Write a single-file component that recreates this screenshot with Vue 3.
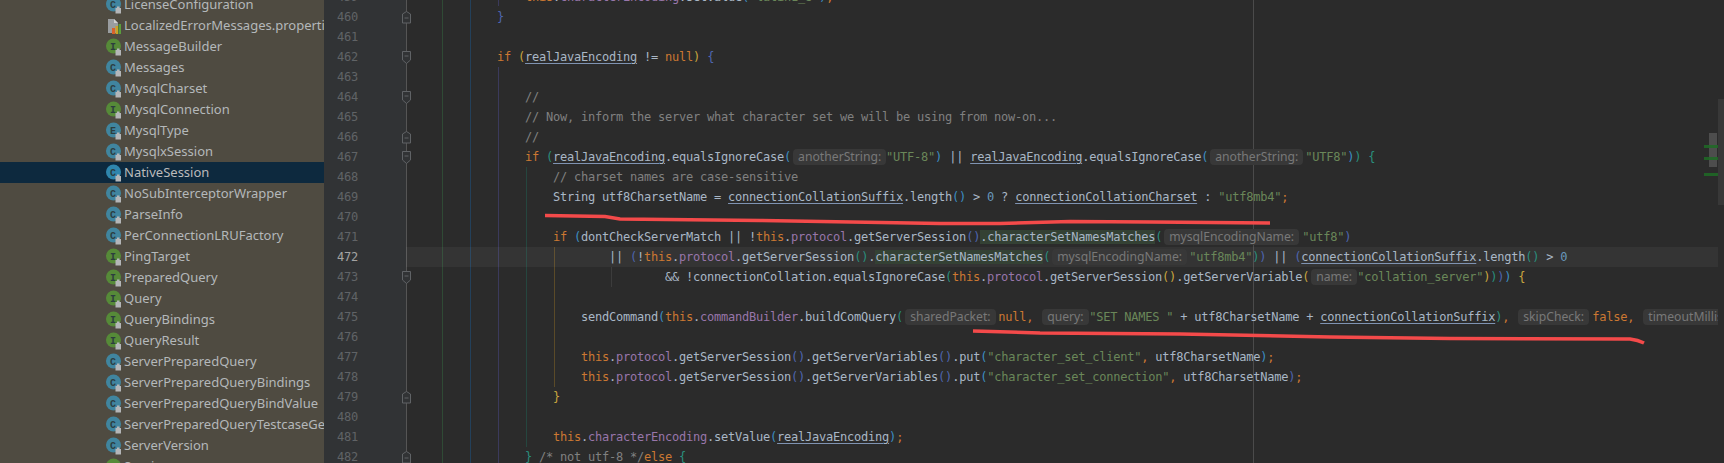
<script setup>
const files = [
  ['C', 'LicenseConfiguration'], ['P', 'LocalizedErrorMessages.properties'], ['I', 'MessageBuilder'], ['C', 'Messages'],
  ['C', 'MysqlCharset'], ['I', 'MysqlConnection'], ['E', 'MysqlType'], ['C', 'MysqlxSession'], ['C', 'NativeSession'],
  ['C', 'NoSubInterceptorWrapper'], ['C', 'ParseInfo'], ['C', 'PerConnectionLRUFactory'], ['I', 'PingTarget'],
  ['I', 'PreparedQuery'], ['I', 'Query'], ['I', 'QueryBindings'], ['I', 'QueryResult'], ['C', 'ServerPreparedQuery'],
  ['C', 'ServerPreparedQueryBindings'], ['C', 'ServerPreparedQueryBindValue'], ['C', 'ServerPreparedQueryTestcaseGenerator'],
  ['C', 'ServerVersion'], ['I', 'Session']
]
const sp = (n) => ['', ' '.repeat(n)]
const lines = {
  459: [sp(12), ['k', 'this'], ['', '.'], ['f', 'characterEncoding'], ['', '.setValue'], ['b1', '('], ['s', '"latin1_8"'], ['b1', ')'], ['k', ';']],
  460: [sp(8), ['b2', '}']],
  461: [],
  462: [sp(8), ['k', 'if '], ['b3', '('], ['u', 'realJavaEncoding'], ['', ' != '], ['k', 'null'], ['b3', ')'], ['', ' '], ['b2', '{']],
  463: [],
  464: [sp(12), ['c', '//']],
  465: [sp(12), ['c', '// Now, inform the server what character set we will be using from now-on...']],
  466: [sp(12), ['c', '//']],
  467: [sp(12), ['k', 'if '], ['b4', '('], ['u', 'realJavaEncoding'], ['', '.equalsIgnoreCase'], ['b1', '('], ['h', 'anotherString:', 95], ['s', '"UTF-8"'], ['b1', ')'], ['', ' || '], ['u', 'realJavaEncoding'], ['', '.equalsIgnoreCase'], ['b1', '('], ['h', 'anotherString:', 97], ['s', '"UTF8"'], ['b1', ')'], ['b4', ')'], ['', ' '], ['b4', '{']],
  468: [sp(16), ['c', '// charset names are case-sensitive']],
  469: [sp(16), ['', 'String utf8CharsetName = '], ['u', 'connectionCollationSuffix'], ['', '.length'], ['b1', '()'], ['', ' > '], ['n', '0'], ['', ' ? '], ['u', 'connectionCollationCharset'], ['', ' : '], ['s', '"utf8mb4"'], ['k', ';']],
  470: [],
  471: [sp(16), ['k', 'if '], ['b1', '('], ['', 'dontCheckServerMatch || !'], ['k', 'this'], ['', '.'], ['f', 'protocol'], ['', '.getServerSession'], ['b2', '()'], ['g', '.characterSetNamesMatches'], ['b4', '('], ['h', 'mysqlEncodingName:', 140], ['s', '"utf8"'], ['b2', ')']],
  472: [sp(24), ['', '|| '], ['b2', '('], ['', '!'], ['k', 'this'], ['', '.'], ['f', 'protocol'], ['', '.getServerSession'], ['b4', '()'], ['', '.'], ['g', 'characterSetNamesMatches'], ['b4', '('], ['h', 'mysqlEncodingName:', 139], ['s', '"utf8mb4"'], ['b4', ')'], ['b2', ')'], ['', ' || '], ['b2', '('], ['u', 'connectionCollationSuffix'], ['', '.length'], ['b4', '()'], ['', ' > '], ['n', '0']],
  473: [sp(32), ['', '&& !connectionCollation.equalsIgnoreCase'], ['b4', '('], ['k', 'this'], ['', '.'], ['f', 'protocol'], ['', '.getServerSession'], ['b3', '()'], ['', '.getServerVariable'], ['b3', '('], ['h', 'name:', 48], ['s', '"collation_server"'], ['b3', ')'], ['b4', ')'], ['b2', ')'], ['b1', ')'], ['', ' '], ['b3', '{']],
  474: [],
  475: [sp(20), ['', 'sendCommand'], ['b1', '('], ['k', 'this'], ['', '.'], ['f', 'commandBuilder'], ['', '.buildComQuery'], ['b4', '('], ['h', 'sharedPacket:', 95], ['k', 'null,'], ['', ' '], ['h', 'query:', 49], ['s', '"SET NAMES "'], ['', ' + utf8CharsetName + '], ['u', 'connectionCollationSuffix'], ['b4', ')'], ['k', ','], ['', ' '], ['h', 'skipCheck:', 76], ['k', 'false,'], ['', ' '], ['h', 'timeoutMillis:', 120]],
  476: [],
  477: [sp(20), ['k', 'this'], ['', '.'], ['f', 'protocol'], ['', '.getServerSession'], ['b2', '()'], ['', '.getServerVariables'], ['b2', '()'], ['', '.put'], ['b1', '('], ['s', '"character_set_client"'], ['k', ','], ['', ' utf8CharsetName'], ['b1', ')'], ['k', ';']],
  478: [sp(20), ['k', 'this'], ['', '.'], ['f', 'protocol'], ['', '.getServerSession'], ['b2', '()'], ['', '.getServerVariables'], ['b2', '()'], ['', '.put'], ['b1', '('], ['s', '"character_set_connection"'], ['k', ','], ['', ' utf8CharsetName'], ['b2', ')'], ['k', ';']],
  479: [sp(16), ['b3', '}']],
  480: [],
  481: [sp(16), ['k', 'this'], ['', '.'], ['f', 'characterEncoding'], ['', '.setValue'], ['b1', '('], ['u', 'realJavaEncoding'], ['b1', ')'], ['k', ';']],
  482: [sp(12), ['b4', '}'], ['', ' '], ['c', '/* not utf-8 */'], ['k', 'else'], ['', ' '], ['b4', '{']]
}
const rows = Object.keys(lines).map((n) => ({ n: +n, segs: lines[n] }))
const foldEnd = new Set([460, 466, 479, 482])
const foldStart = new Set([462, 464, 467, 473])
</script>

<template>
  <div class="screen">
    <aside class="tree">
      <div v-for="f in files" :key="f[1]" class="node" :class="{ sel: f[1] === 'NativeSession' }">
        <svg class="ico" width="16" height="18" viewBox="0 0 16 18">
          <template v-if="f[0] === 'P'">
            <path d="M2 2h6l4 4v10H2z" fill="#9a9da0" />
            <path d="M8 2l4 4H8z" fill="#d0d0d0" />
            <rect x="6" y="11" width="3" height="6" fill="#d8622b" />
            <rect x="9.500" y="9" width="2.500" height="8" fill="#c9a227" />
            <rect x="12.500" y="7" width="2.500" height="10" fill="#5a9e3c" />
          </template>
          <template v-else>
            <circle cx="7.500" cy="8" r="7.500" :fill="f[0] === 'I' ? '#568a38' : (f[1] === 'NativeSession' ? '#2f86ad' : '#40859f')" />
            <text x="7" y="11.500" text-anchor="middle" class="ltr">{{ f[0] }}</text>
            <rect x="9.500" y="12" width="5.500" height="5.500" fill="#b4b6b8" />
            <rect x="11" y="10.500" width="2.500" height="2" fill="#b4b6b8" />
          </template>
        </svg>
        <span class="name">{{ f[1] }}</span>
      </div>
    </aside>

    <main class="editor">
      <i class="guide" style="left:118px;top:0;bottom:0;background:#2f4a35"></i>
      <i class="guide" style="left:146px;top:0;bottom:0;background:#23405a"></i>
      <i class="guide" style="left:174px;top:0;height:6px;background:#3b3a5c"></i>
      <i class="guide" style="left:174px;top:67px;bottom:0;background:#3b3a5c"></i>
      <i class="guide" style="left:202px;top:167px;height:280px;background:#25463f"></i>
      <i class="guide" style="left:230px;top:247px;height:140px;background:#5a4a28"></i>
      <i class="guide" style="left:287px;top:267px;height:20px;background:#3c3c3c"></i>
      <i class="guide" style="left:929px;top:0;bottom:0;background:#4b4b4b"></i>
      <i class="foldline"></i>
      <div class="lines">
        <div v-for="r in rows" :key="r.n" class="row" :class="{ cur: r.n === 472 }">
          <span class="num">{{ r.n }}</span>
          <svg v-if="foldEnd.has(r.n)" class="fold" width="9" height="13" viewBox="0 0 9 13">
            <path d="M4.500.5L8.500 3v9H.5V3z" fill="#313335" stroke="#606366" />
            <path d="M2.500 7h4" stroke="#606366" />
          </svg>
          <svg v-else-if="foldStart.has(r.n)" class="fold" width="9" height="13" viewBox="0 0 9 13">
            <path d="M.5.5h8V9l-4 3.500L.5 9z" fill="#313335" stroke="#606366" />
            <path d="M2.500 5h4" stroke="#606366" />
          </svg>
          <code class="code"><template v-for="(s, i) in r.segs" :key="i"><span v-if="s[0] === 'h'" class="hint" :style="{ width: s[2] + 'px' }"><span class="pill">{{ s[1] }}</span></span><span v-else :class="s[0]">{{ s[1] }}</span></template></code>
        </div>
      </div>
    </main>

    <div class="stripe">
      <i class="thumb"></i>
    </div>
    <i class="mapthumb"></i>
    <i class="mark" style="top:145px"></i>
    <i class="mark" style="top:157px"></i>
    <i class="mark" style="top:173px"></i>

    <svg class="ink" width="1724" height="463" viewBox="0 0 1724 463">
      <path d="M545 215.500L605 216.500L620 219L760 220.500L940 223.500L1000 223.500L1070 221.500L1150 222L1270 223" />
      <path d="M973 331L1040 333L1180 334L1330 337L1450 338.500L1630 339Q1638 340 1644 343" />
    </svg>
  </div>
</template>

<style>
html, body { margin: 0; background: #2b2b2b; }
</style>

<style scoped>
.screen {
  position: relative;
  display: flex;
  width: 1724px;
  height: 463px;
  overflow: hidden;
  background: #2b2b2b;
}
.tree {
  flex: none;
  width: 324px;
  height: 463px;
  overflow: hidden;
  background: #4f4b41;
  font: 13px/21px "Noto Sans", sans-serif;
  color: #b4b8ba;
}
.tree .node:first-child { margin-top: -6px; }
.node {
  display: flex;
  align-items: center;
  height: 21px;
  padding-left: 106px;
  white-space: nowrap;
}
.node.sel { background: #0d293e; color: #bbbbbb; }
.ico { flex: none; margin-right: 2px; }
.ltr { font: bold 10px "Liberation Mono", monospace; fill: #2c3d3f; }
.editor {
  position: relative;
  flex: 1;
  min-width: 0;
  height: 463px;
  overflow: hidden;
}
.guide { position: absolute; width: 1px; z-index: 1; }
.foldline { position: absolute; left: 82px; top: 0; bottom: 0; width: 1px; background: #555; z-index: 2; }
.lines { position: relative; z-index: 3; margin-top: -13px; }
.row {
  position: relative;
  display: flex;
  height: 20px;
  font: 12px/20px "DejaVu Sans Mono", monospace;
  letter-spacing: -0.2246px;
  color: #a9b7c6;
}
.num {
  flex: none;
  box-sizing: border-box;
  width: 82px;
  padding-left: 13px;
  background: #313335;
  color: #606366;
}
.row.cur .num { color: #a4a3a3; }
.row.cur .code { background: rgba(255, 255, 255, 0.045); }
.code {
  flex: 1;
  min-width: 0;
  padding-left: 35px;
  font: inherit;
  white-space: pre;
  overflow: hidden;
}
.fold { position: absolute; left: 78px; top: 4px; z-index: 4; }
.k { color: #cc7832; }
.f { color: #9876aa; }
.s { color: #6a8759; }
.c { color: #808080; }
.n { color: #6897bb; }
.u { text-decoration: underline; text-decoration-color: #7f93b2; text-underline-offset: 2px; }
.g { background: #344134; }
.b1 { color: #3d8fc4; }
.b2 { color: #4f66b0; }
.b3 { color: #c9a63f; }
.b4 { color: #2a8f7e; }
.hint {
  display: inline-block;
  height: 20px;
  vertical-align: top;
  letter-spacing: 0;
}
.pill {
  display: inline-block;
  box-sizing: border-box;
  margin: 2px 0 0 2px;
  padding: 0 5px;
  height: 16px;
  border-radius: 4px;
  background: #383838;
  color: #787878;
  font: 12.200px/15px "Noto Sans", sans-serif;
  white-space: nowrap;
}
.stripe {
  position: relative;
  flex: none;
  width: 6px;
  height: 463px;
  background: #2b2b2b;
  z-index: 5;
}
.thumb { position: absolute; left: 0; top: 99px; width: 6px; height: 106px; background: #383838; }
.mapthumb { position: absolute; left: 1709px; top: 133px; width: 8px; height: 34px; background: #4d4d4d; z-index: 6; }
.mark { position: absolute; left: 1704px; width: 14px; height: 3px; background: #1f6b26; opacity: 0.85; z-index: 6; }
.ink { position: absolute; left: 0; top: 0; z-index: 7; pointer-events: none; }
.ink path { fill: none; stroke: #f44a4a; stroke-width: 3.500; }
</style>
